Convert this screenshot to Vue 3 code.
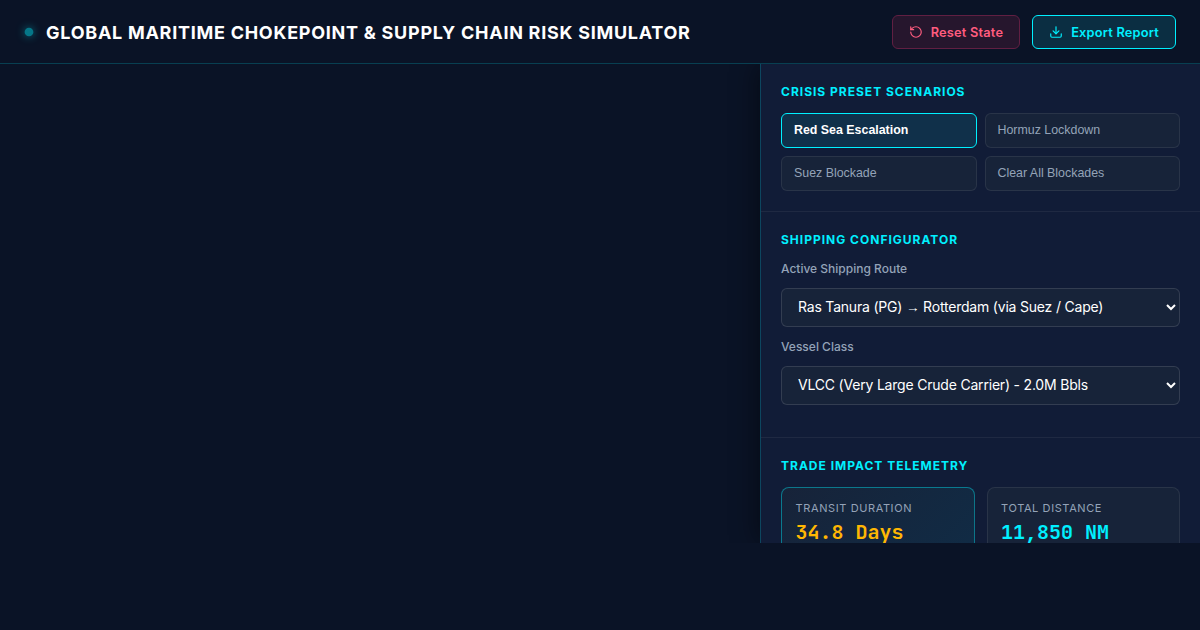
<script setup>
import { ref } from 'vue'

const presets = ['Red Sea Escalation', 'Hormuz Lockdown', 'Suez Blockade', 'Clear All Blockades']
const activePreset = ref(presets[0])
const metrics = [
  { label: 'Transit Duration', value: '34.8 Days', primary: true },
  { label: 'Total Distance', value: '11,850 NM', primary: false },
]
</script>

<template>
  <div class="app">
    <header class="header">
      <div class="brand">
        <span class="pulse"></span>
        <h1>Global Maritime Chokepoint &amp; Supply Chain Risk Simulator</h1>
      </div>
      <div class="actions">
        <button class="btn danger">
          <svg viewBox="0 0 24 24"><path d="M3 12a9 9 0 1 0 9-9 9.75 9.75 0 0 0-6.74 2.74L3 8" /><path d="M3 3v5h5" /></svg>
          <span>Reset State</span>
        </button>
        <button class="btn accent">
          <svg viewBox="0 0 24 24"><path d="M21 15v4a2 2 0 0 1-2 2H5a2 2 0 0 1-2-2v-4" /><path d="m7 10 5 5 5-5" /><path d="M12 15V3" /></svg>
          <span>Export Report</span>
        </button>
      </div>
    </header>
    <main class="workspace">
      <div class="map"></div>
      <aside class="panel">
        <section class="section">
          <h2>Crisis Preset Scenarios</h2>
          <div class="presets">
            <button
              v-for="p in presets"
              :key="p"
              class="preset"
              :class="{ active: p === activePreset }"
              @click="activePreset = p"
            >{{ p }}</button>
          </div>
        </section>
        <section class="section">
          <h2>Shipping Configurator</h2>
          <div class="field">
            <div class="caption">Active Shipping Route</div>
            <div class="select" role="combobox" tabindex="0">
              <span class="option">Ras Tanura (PG) <span class="arrow">→</span> Rotterdam (via Suez / Cape)</span>
              <svg viewBox="0 0 10 6"><path d="M1 1l4 4 4-4" /></svg>
            </div>
          </div>
          <div class="field">
            <div class="caption">Vessel Class</div>
            <div class="select" role="combobox" tabindex="0">
              <span class="option">VLCC (Very Large Crude Carrier) - 2.0M Bbls</span>
              <svg viewBox="0 0 10 6"><path d="M1 1l4 4 4-4" /></svg>
            </div>
          </div>
        </section>
        <section class="section">
          <h2>Trade Impact Telemetry</h2>
          <div class="metrics">
            <div v-for="m in metrics" :key="m.label" class="metric" :class="{ primary: m.primary }">
              <div class="label">{{ m.label }}</div>
              <div class="value">{{ m.value }}</div>
            </div>
          </div>
        </section>
      </aside>
    </main>
  </div>
</template>

<style>
body {
  margin: 0;
  background: #0a1326;
  overflow: hidden;
}
</style>

<style scoped>
* { box-sizing: border-box; }
.app {
  height: 630px;
  font-family: Inter, sans-serif;
  color: #fff;
  background: #0a1326;
}
.header {
  height: 64px;
  padding: 0 24px;
  display: flex;
  align-items: center;
  justify-content: space-between;
  border-bottom: 1px solid rgba(0, 240, 255, 0.2);
}
.brand { display: flex; align-items: center; gap: 12px; }
.pulse {
  width: 10px;
  height: 10px;
  border-radius: 50%;
  background: #00f0ff;
  box-shadow: 0 0 10px #00f0ff;
  opacity: 0.45;
  transform: scale(0.87);
}
h1 {
  margin: 0;
  padding-top: 2px;
  font-size: 18px;
  line-height: 22px;
  font-weight: 700;
  letter-spacing: 0.73px;
  text-transform: uppercase;
}
.actions { display: flex; gap: 12px; }
.btn {
  height: 34px;
  display: inline-flex;
  align-items: center;
  gap: 8px;
  padding: 0 16px;
  border-radius: 6px;
  border: 1px solid;
  font: 600 12.8px Inter, sans-serif;
  letter-spacing: 0.2px;
}
.btn span { padding-top: 2px; }
.btn svg {
  width: 14px;
  height: 14px;
  fill: none;
  stroke: currentColor;
  stroke-width: 2;
  stroke-linecap: round;
  stroke-linejoin: round;
}
.danger { color: #ff5c7f; background: #26162d; border-color: #611f42; }
.accent { color: #00f0ff; background: #0b2e42; border-color: #00f0ff; }
.workspace { display: flex; height: 479px; overflow: hidden; }
.map { flex: 1; }
.panel {
  width: 440px;
  background: #111c37;
  border-left: 1px solid rgba(0, 240, 255, 0.2);
  box-shadow: -4px 0 24px rgba(0, 0, 0, 0.4);
}
.section { padding: 20px; border-bottom: 1px solid rgba(255, 255, 255, 0.06); }
h2 {
  margin: 0 0 14px;
  font-size: 12px;
  line-height: 15px;
  font-weight: 700;
  letter-spacing: 1px;
  text-transform: uppercase;
  color: #00f0ff;
}
.presets { display: grid; grid-template-columns: 1fr 1fr; gap: 8px; }
.preset {
  height: 35px;
  padding: 0 12px 1px;
  text-align: left;
  border-radius: 6px;
  border: 1px solid rgba(255, 255, 255, 0.08);
  background: #172339;
  color: #94a3b8;
  font: 400 12.4px "Liberation Sans", sans-serif;
}
.preset.active { color: #fff; font-weight: 600; background: #10304a; border-color: #00f0ff; }
.field { margin-bottom: 12px; }
.caption {
  margin-bottom: 12px;
  font-size: 12px;
  line-height: 15px;
  font-weight: 500;
  color: #94a3b8;
}
.select {
  display: flex;
  align-items: center;
  justify-content: space-between;
  height: 39px;
  padding: 0 3px 1px 16px;
  border-radius: 6px;
  border: 1px solid rgba(255, 255, 255, 0.12);
  background: #172339;
  color: #fff;
  font-size: 14px;
  line-height: 17px;
  letter-spacing: -0.2px;
}
.option { padding-bottom: 2px; }
.select svg {
  width: 10px;
  height: 6px;
  fill: none;
  stroke: currentColor;
  stroke-width: 2;
  overflow: visible;
}
.arrow { font-family: "Liberation Sans", sans-serif; font-size: 13.6px; line-height: 1; }
.metrics { display: grid; grid-template-columns: 1fr 1fr; gap: 12px; }
.metric {
  height: 90px;
  padding: 14px 13.6px;
  border-radius: 8px;
  border: 1px solid rgba(255, 255, 255, 0.08);
  background: #172339;
}
.metric.primary {
  border-color: rgba(0, 240, 255, 0.4);
  background: linear-gradient(135deg, #172339, #102c46);
}
.label {
  font-size: 11px;
  line-height: 13px;
  letter-spacing: 0.6px;
  text-transform: uppercase;
  color: #94a3b8;
}
.value {
  margin-top: 4px;
  font: 700 20px/26px "JetBrains Mono", "Liberation Mono", monospace;
  color: #00f0ff;
}
.primary .value { color: #ffb703; }
</style>
